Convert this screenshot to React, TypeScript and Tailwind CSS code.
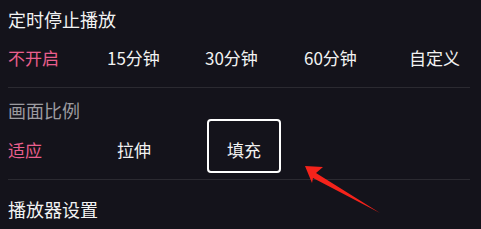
const font = { fontFamily: '"Noto Sans CJK SC", "Noto Sans", sans-serif' };

function Option({
  label,
  active,
  className,
}: {
  label: string;
  active?: boolean;
  className?: string;
}) {
  return (
    <div className={className}>
      <span
        className={
          "text-[17px] leading-[24px] " +
          (active ? "text-[#ea5f8d]" : "text-[#f2f2f2]")
        }
      >
        {label}
      </span>
    </div>
  );
}

export default function App() {
  return (
    <div
      className="relative w-[481px] h-[229px] overflow-hidden bg-[#14131b] pl-2 pr-[11px]"
      style={font}
    >
      <div className="h-[38px] flex items-center text-[18px] text-[#f2f2f2]">
        定时停止播放
      </div>

      <div className="h-[39px] flex items-center">
        <Option label="不开启" active className="w-[99px]" />
        <Option label="15分钟" className="w-[98px]" />
        <Option label="30分钟" className="w-[99px]" />
        <Option label="60分钟" className="w-[105px]" />
        <Option label="自定义" />
      </div>

      <div className="mt-[10px] h-px bg-[#2b2a31]" />

      <div className="h-[44px] flex items-center text-[18px] text-[#9c9ba0]">
        画面比例
      </div>

      <div className="h-[36px] flex items-center">
        <Option label="适应" active className="w-[109px]" />
        <Option label="拉伸" className="w-[110px]" />
        <div className="relative text-[17px] leading-[24px] text-[#f2f2f2]">
          填充
          <div className="absolute left-[-20px] top-[-19px] w-[74px] h-[54px] rounded-[4px] border-2 border-white" />
        </div>
      </div>

      <div className="mt-[11px] h-px bg-[#2b2a31]" />

      <div className="h-[59px] flex items-center text-[18px] text-[#f2f2f2]">
        播放器设置
      </div>

      <svg
        className="absolute inset-0 w-full h-full pointer-events-none"
        viewBox="0 0 481 229"
      >
        <polygon
          points="305,166 323,167 316,173 380,213 313,178 312,183"
          fill="#f5231b"
        />
      </svg>
    </div>
  );
}
